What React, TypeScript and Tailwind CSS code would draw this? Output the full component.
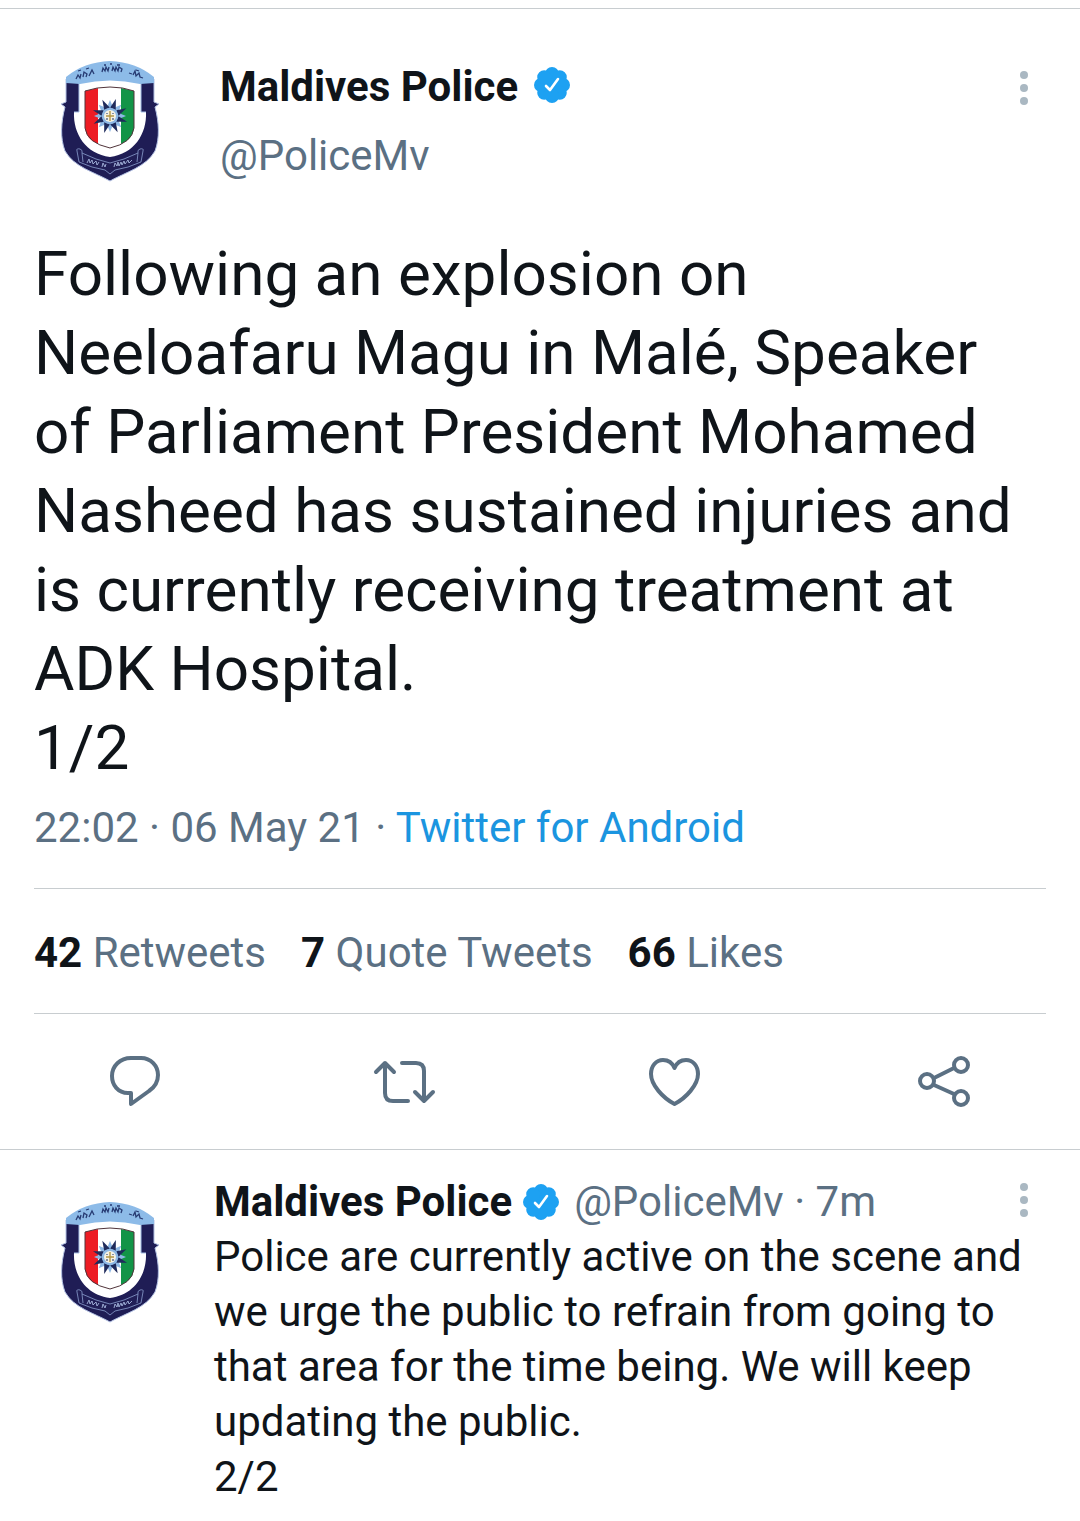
import type { ReactNode } from 'react';

interface Stat {
  count: number;
  label: string;
}

const stats: Stat[] = [
  { count: 42, label: 'Retweets' },
  { count: 7, label: 'Quote Tweets' },
  { count: 66, label: 'Likes' },
];

const tweetText =
  'Following an explosion on Neeloafaru Magu in Malé, Speaker of Parliament President Mohamed Nasheed has sustained injuries and is currently receiving treatment at ADK Hospital.';

const replyText =
  'Police are currently active on the scene and we urge the public to refrain from going to that area for the time being. We will keep updating the public.';

const lobeAngles = [0, 45, 90, 135, 180, 225, 270, 315];
const pointAngles = [22, 68, 112, 158, 202, 248, 292, 338];

function Crest() {
  return (
    <svg viewBox="0 0 120 140" className="h-[140px] w-[120px] shrink-0" role="img" aria-label="Maldives Police">
      {/* outer body */}
      <path
        d="M16 29 H104 V52 L109 54 L105 57 C109 72 110 88 105 101 C96 117 76 122 60 131 C44 122 24 117 15 101 C10 88 11 72 15 57 L11 54 L16 52 Z"
        fill="#1f1d55"
        stroke="#b4c2e4"
        strokeWidth="1"
      />
      {/* white field */}
      <path
        d="M29 31 Q60 25 91 31 V62 H96 C97 84 84 104 60 107 C36 104 23 84 24 62 H29 Z"
        fill="#fff"
      />
      <path d="M29 33 V62 H24 M91 33 V62 H96" fill="none" stroke="#a9c3e8" strokeWidth="1" />
      {/* top band */}
      <path d="M16 27 Q34 12 60 11 Q86 12 104 27 V33 L90 34 Q60 27 30 34 L16 33 Z" fill="#8dbbe8" />
      <path
        d="M26 29 l2 -4 l2 3 l1 -4 M33 27 l1 -5 l3 2 l-1 3 M39 26 l3 -6 l2 4 M28 21 l3 -1 M36 19 l3 -1 M52 22 l1 -4 l2 3 l1 -4 l2 4 l1 -4 M62 21 l1 -4 l2 4 l1 -4 l2 4 l1 -4 l3 2 l-1 3 M54 15 h2 M60 14 h2 M67 15 h3 M79 23 l3 1 M83 25 l2 -4 l1 5 l3 -3 l1 4 l3 1 M86 20 l3 1"
        fill="none"
        stroke="#273b73"
        strokeWidth="1.3"
      />
      {/* flag shield */}
      <path d="M35 41 Q47 37 60 37 Q73 37 84 41 V78 Q82 93 60 98 Q37 93 35 78 Z" fill="#fff" />
      <path d="M35 41 L48 38 V94 Q36 89 35 78 Z" fill="#ed1c24" />
      <path d="M71 38 L84 41 V78 Q83 89 71 94 Z" fill="#129447" />
      <path
        d="M35 41 Q47 37 60 37 Q73 37 84 41 V78 Q82 93 60 98 Q37 93 35 78 Z"
        fill="none"
        stroke="#50343a"
        strokeWidth="1"
      />
      {/* star */}
      {lobeAngles.map((angle) => (
        <path key={angle} d="M55 62 L60 50 L65 62 Z" fill="#8db8e5" transform={`rotate(${angle} 60 66)`} />
      ))}
      {pointAngles.map((angle) => (
        <path key={angle} d="M57 58 L59 48 L63 58 Z" fill="#1f2b5c" transform={`rotate(${angle} 60 66)`} />
      ))}
      <circle cx="60" cy="66" r="8" fill="#8db8e5" />
      <circle cx="60" cy="66" r="6" fill="#f6f2e4" />
      <path d="M60 61 V71 M56 66 H64" stroke="#b39747" strokeWidth="1.4" />
      <path d="M57 63 v1 M63 63 v1 M57 68 v2 M63 68 v2" stroke="#3c4f7d" strokeWidth="1.2" />
      {/* scroll */}
      <path
        d="M27 101 q-1 -3 3 -2 q3 1 2 4 Q46 110 60 113 Q74 110 88 103 q-1 -3 2 -4 q4 -1 3 2 L91 112 Q78 118 65 120 L60 124 L55 120 Q42 118 29 112 Z M32 103 L33 112 M88 103 L87 112"
        fill="#211f57"
        stroke="#8ba0cf"
        strokeWidth="0.8"
      />
      <path
        d="M37 113 l2 -4 l1 4 l2 -3 l1 4 l3 -3 l1 4 l2 -3 M52 117 l1 -4 l2 4 l1 -3 M64 117 l1 -4 l2 3 l1 -4 l1 4 l2 -4 l1 3 l2 -4 l1 3 l3 -4 l1 3 l3 -3"
        fill="none"
        stroke="#a7b8df"
        strokeWidth="0.9"
      />
    </svg>
  );
}

function VerifiedBadge() {
  return (
    <svg viewBox="0 0 38 38" className="size-[38px] shrink-0" role="img" aria-label="Verified account">
      <g fill="#1da1f2">
        <circle cx="19" cy="19" r="15" />
        {lobeAngles.map((angle) => (
          <circle key={angle} cx="19" cy="8" r="7" transform={`rotate(${angle} 19 19)`} />
        ))}
      </g>
      <path
        d="M13 20 L17 24 L25 13"
        fill="none"
        stroke="#fff"
        strokeWidth="2.6"
        strokeLinecap="round"
        strokeLinejoin="round"
      />
    </svg>
  );
}

function MoreButton() {
  return (
    <button type="button" aria-label="More" className="flex shrink-0 flex-col gap-[5px]">
      <span className="size-2 rounded-full bg-[#aab8c2]" />
      <span className="size-2 rounded-full bg-[#aab8c2]" />
      <span className="size-2 rounded-full bg-[#aab8c2]" />
    </button>
  );
}

function ActionButton({ label, children }: { label: string; children: ReactNode }) {
  return (
    <button type="button" aria-label={label} className="flex items-center justify-center">
      <svg
        viewBox="0 0 90 80"
        className="h-20 w-[90px]"
        fill="none"
        stroke="#5b7083"
        strokeWidth="4"
        strokeLinecap="round"
        strokeLinejoin="round"
      >
        {children}
      </svg>
    </button>
  );
}

export default function App() {
  return (
    <main className="min-h-screen bg-white pt-2 font-['Roboto',sans-serif] text-[42px] leading-[55px] text-[#0f1419]">
      <article className="border-y border-[#c8cdd0]">
        <header className="flex items-start pt-[41px] pr-[52px] pl-[50px]">
          <Crest />
          <div className="ml-[50px] flex-1 pt-[9px]">
            <div className="flex items-center gap-[15px]">
              <span className="font-bold">Maldives Police</span>
              <span className="pb-1">
                <VerifiedBadge />
              </span>
            </div>
            <p className="mt-[14px] text-[#5b7083]">@PoliceMv</p>
          </div>
          <div className="pt-[21px]">
            <MoreButton />
          </div>
        </header>

        <div className="px-[34px]">
          <div className="mt-11 pr-4 text-[62px] leading-[79px]">
            <p>{tweetText}</p>
            <p>1/2</p>
          </div>
          <p className="mt-[13px] pb-[33px] text-[#5b7083]">
            22:02 · 06 May 21 ·{' '}
            <a href="#source" className="text-[#1b95e0]">
              Twitter for Android
            </a>
          </p>
          <div className="flex gap-[35px] border-y border-[#c8cdd0] pt-9 pb-[33px] text-[#5b7083]">
            {stats.map((stat) => (
              <a key={stat.label} href="#stats">
                <span className="font-bold text-[#0f1419]">{stat.count}</span> {stat.label}
              </a>
            ))}
          </div>
        </div>

        <div className="grid grid-cols-4 pt-[26px] pb-[29px]">
          <ActionButton label="Reply">
            <path d="M41 18 H51 C61 18 68 26 68 35 C68 42 65 47 59 51 L41 64 V53 H38 C28 53 22 45 22 36 C22 26 30 18 41 18 Z" />
          </ActionButton>
          <ActionButton label="Retweet">
            <path d="M16 32 L25 23 L34 32 M25 23 V53 Q25 61 33 61 H48 M42 23 H56 Q64 23 64 31 V61 M55 52 L64 61 L73 52" />
          </ActionButton>
          <ActionButton label="Like">
            <path d="M44.500 28 C42 22 38 20 33 20 C26 20 21 26 21 34 C21 45 33 58 44.500 64 C56 58 68 45 68 34 C68 26 63 20 56 20 C51 20 47 22 44.500 28 Z" />
          </ActionButton>
          <ActionButton label="Share">
            <circle cx="27" cy="41" r="7" />
            <circle cx="61" cy="25" r="7" />
            <circle cx="61" cy="58" r="7" />
            <path d="M34 38 L54 28 M34 45 L54 54" />
          </ActionButton>
        </div>
      </article>

      <article className="flex items-start pt-6 pl-[50px]">
        <div className="pt-[17px]">
          <Crest />
        </div>
        <div className="ml-11 min-w-0 flex-1">
          <header className="flex items-center pr-[52px]">
            <span className="font-bold">Maldives Police</span>
            <span className="ml-[10px]">
              <VerifiedBadge />
            </span>
            <span className="ml-[14px] flex-1 text-[#5b7083]">@PoliceMv · 7m</span>
            <span className="pb-1">
              <MoreButton />
            </span>
          </header>
          <div className="pr-12">
            <p>{replyText}</p>
            <p>2/2</p>
          </div>
        </div>
      </article>
    </main>
  );
}
